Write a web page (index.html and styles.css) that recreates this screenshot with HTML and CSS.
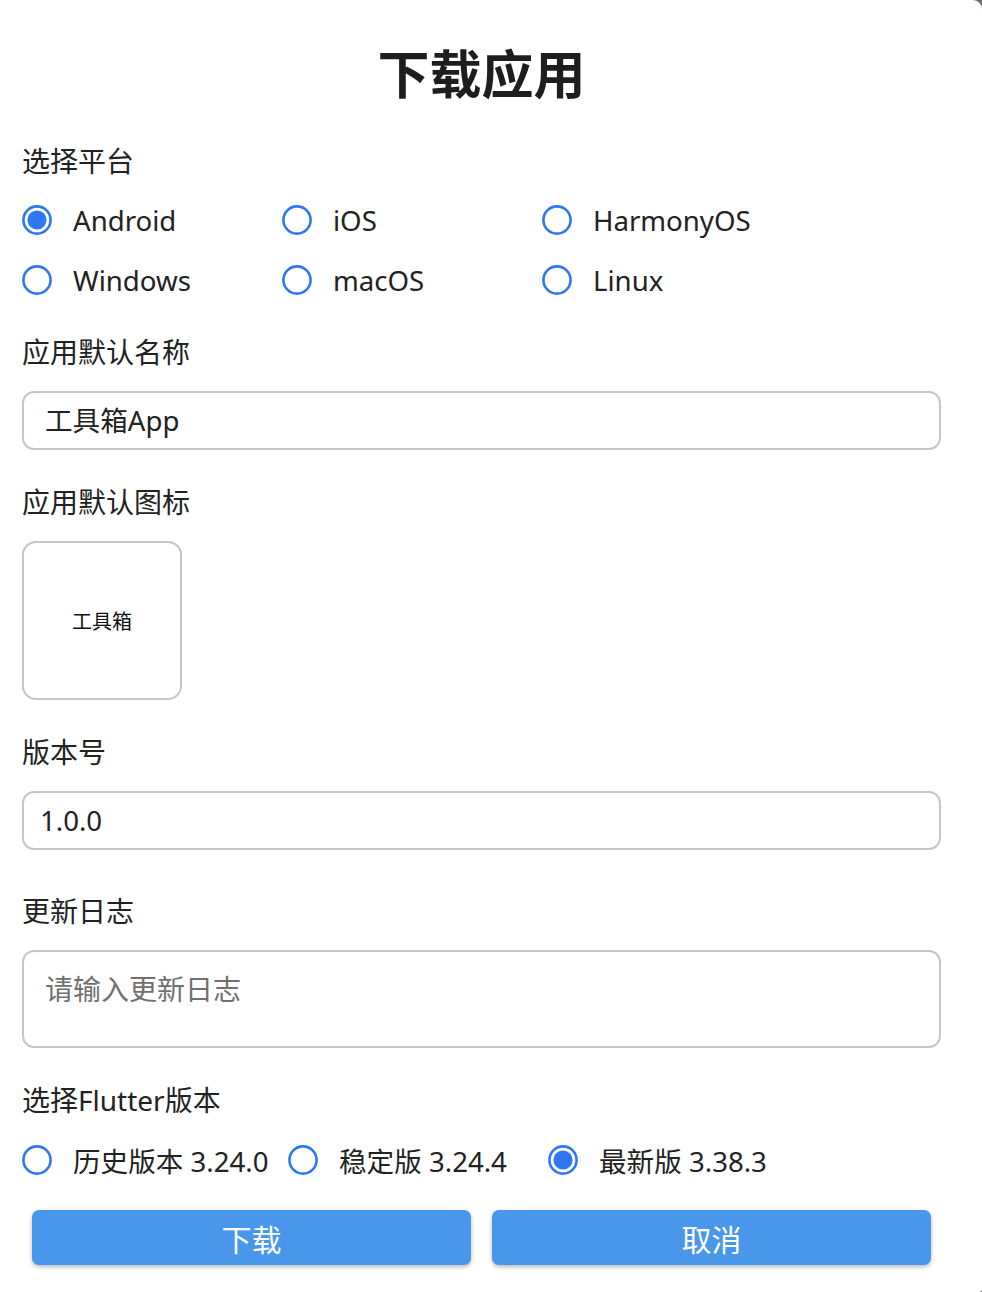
FILE: index.html
```html
<!DOCTYPE html>
<html lang="zh-CN">
<head>
<meta charset="utf-8">
<title>下载应用</title>
<link rel="stylesheet" href="styles.css">
</head>
<body>
<div class="dialog">
  <div class="content">
    <h1 class="title">下载应用</h1>

    <div class="label label-first">选择平台</div>
    <div class="platforms">
      <div class="radio-item"><svg class="radio" viewBox="0 0 30 30"><circle cx="15" cy="15" r="13.6" class="ring"/><circle cx="15" cy="15" r="9.6" class="dot"/></svg><span>Android</span></div>
      <div class="radio-item"><svg class="radio" viewBox="0 0 30 30"><circle cx="15" cy="15" r="13.6" class="ring"/></svg><span>iOS</span></div>
      <div class="radio-item"><svg class="radio" viewBox="0 0 30 30"><circle cx="15" cy="15" r="13.6" class="ring"/></svg><span>HarmonyOS</span></div>
      <div class="radio-item"><svg class="radio" viewBox="0 0 30 30"><circle cx="15" cy="15" r="13.6" class="ring"/></svg><span>Windows</span></div>
      <div class="radio-item"><svg class="radio" viewBox="0 0 30 30"><circle cx="15" cy="15" r="13.6" class="ring"/></svg><span>macOS</span></div>
      <div class="radio-item"><svg class="radio" viewBox="0 0 30 30"><circle cx="15" cy="15" r="13.6" class="ring"/></svg><span>Linux</span></div>
    </div>

    <div class="label label-gap22">应用默认名称</div>
    <div class="field field-name">工具箱App</div>

    <div class="label label-gap33">应用默认图标</div>
    <div class="icon-box">工具箱</div>

    <div class="label label-gap33">版本号</div>
    <div class="field field-version">1.0.0</div>

    <div class="label label-gap43">更新日志</div>
    <div class="textarea"><span class="placeholder">请输入更新日志</span></div>

    <div class="label label-gap32">选择Flutter版本</div>
    <div class="versions">
      <div class="radio-item v1"><svg class="radio" viewBox="0 0 30 30"><circle cx="15" cy="15" r="13.6" class="ring"/></svg><span>历史版本 3.24.0</span></div>
      <div class="radio-item v2"><svg class="radio" viewBox="0 0 30 30"><circle cx="15" cy="15" r="13.6" class="ring"/></svg><span>稳定版 3.24.4</span></div>
      <div class="radio-item v3"><svg class="radio" viewBox="0 0 30 30"><circle cx="15" cy="15" r="13.6" class="ring"/><circle cx="15" cy="15" r="9.6" class="dot"/></svg><span>最新版 3.38.3</span></div>
    </div>

    <div class="buttons">
      <button class="btn">下载</button>
      <button class="btn">取消</button>
    </div>
  </div>
</div>
</body>
</html>
```

FILE: styles.css
```css
html, body {
  margin: 0;
  padding: 0;
  background: #6e6e6e;
  overflow: hidden;
}
body {
  width: 982px;
  height: 1292px;
  font-family: "Noto Sans", "Noto Sans CJK SC", sans-serif;
  color: #222222;
}
.dialog {
  width: 982px;
  height: 1292px;
  background: #ffffff;
  border-top-right-radius: 9px;
  border-bottom-right-radius: 3px;
}
.content {
  padding: 42px 41px 0 22px;
}
.title {
  margin: 0;
  font-size: 52px;
  line-height: 60px;
  font-weight: 700;
  text-align: center;
  color: #1e1e1e;
  font-family: "Noto Sans CJK SC", sans-serif;
}
.label {
  font-size: 28px;
  line-height: 40px;
  height: 40px;
}
.label-first { margin-top: 39px; }
.label-gap22 { margin-top: 22px; }
.label-gap33 { margin-top: 32px; }
.label-gap43 { margin-top: 41px; }
.label-gap32 { margin-top: 32px; }

.platforms {
  margin-top: 9px;
  display: grid;
  grid-template-columns: 260px 260px 260px;
  grid-auto-rows: 60px;
}
.radio-item {
  display: flex;
  align-items: center;
  height: 60px;
  font-size: 27.6px;
}
.radio {
  width: 30px;
  height: 30px;
  margin-right: 21px;
  flex: none;
}
.ring {
  fill: none;
  stroke: #2f77f5;
  stroke-width: 2.6;
}
.dot {
  fill: #2f77f5;
}

.field {
  margin-top: 19px;
  height: 55px;
  border: 2px solid #c6c6c6;
  border-radius: 12px;
  font-size: 27.6px;
  line-height: 55px;
}
.field-name { padding-left: 21px; }
.field-version { padding-left: 16px; }

.icon-box {
  margin-top: 19px;
  width: 156px;
  height: 155px;
  border: 2px solid #c6c6c6;
  border-radius: 14px;
  display: flex;
  align-items: center;
  justify-content: center;
  font-size: 20px;
  color: #111111;
}

.textarea {
  margin-top: 19px;
  height: 94px;
  border: 2px solid #c6c6c6;
  border-radius: 12px;
  padding-left: 21px;
}
.placeholder {
  display: block;
  margin-top: 17px;
  font-size: 28px;
  line-height: 40px;
  color: #707070;
}

.versions {
  margin-top: 10px;
  display: flex;
}
.v1 { width: 266px; }
.v2 { width: 260px; }

.buttons {
  margin-top: 20px;
  padding: 0 10px;
  display: flex;
  gap: 21px;
}
.btn {
  flex: 1;
  height: 55px;
  border: none;
  border-radius: 7px;
  background: #4897ea;
  color: #ffffff;
  font-family: "Noto Sans CJK SC", sans-serif;
  font-size: 30px;
  box-shadow: 0 2px 4px rgba(0, 0, 0, 0.28);
  padding: 0;
}
```
